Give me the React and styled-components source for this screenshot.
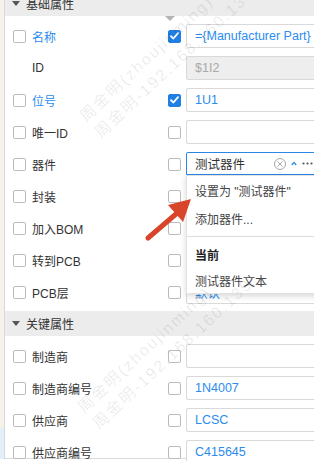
import styled, { createGlobalStyle } from "styled-components";

const GlobalStyle = createGlobalStyle`
  html, body {
    margin: 0;
    padding: 0;
    background: #fff;
  }
  body {
    font-family: "Liberation Sans", "Noto Sans CJK SC", sans-serif;
    font-size: 12px;
    color: #333;
  }
`;

const blue = "#2b8cee";

const Screen = styled.div`
  position: relative;
  width: 314px;
  height: 461px;
  overflow: hidden;
  display: flex;
  align-items: flex-start;
  background: #fff;
`;

const Gutter = styled.div`
  flex: none;
  width: 4px;
  height: 459px;
  background: linear-gradient(to bottom, #f6f2ea 0 428px, #e3effa 428px);
  border-right: 1px solid #d8d8d8;
`;

const Panel = styled.div`
  flex: none;
  width: 313px;
  height: 458px;
  border-bottom: 1px solid #dadada;
`;

const Scroller = styled.div`
  margin-top: -9px;
`;

const SectionHead = styled.div`
  height: 25px;
  display: flex;
  align-items: center;
  gap: 6px;
  padding-left: 7px;
  background: #ececec;
  font-size: 12px;
  color: #333;
  &::before {
    content: "";
    border-left: 4.5px solid transparent;
    border-right: 4.5px solid transparent;
    border-top: 5px solid #555;
  }
`;

const Body = styled.div`
  position: relative;
  padding: 4px 0 3px;
`;

const Splitter = styled.span`
  position: absolute;
  left: 160px;
  top: 0;
  border-left: 5px solid transparent;
  border-right: 5px solid transparent;
  border-top: 5px solid #b4b4b4;
`;

const Row = styled.div`
  height: 32px;
  display: grid;
  grid-template-columns: 155px 18px 1fr;
  align-items: center;
  padding-left: 8px;
`;

const LabelCell = styled.div`
  display: flex;
  align-items: center;
  gap: 6px;
  color: ${(p) => (p.$blue ? blue : "#333")};
  white-space: nowrap;
`;

const Box = styled.span`
  flex: none;
  width: 13px;
  height: 13px;
  box-sizing: border-box;
  border: 1px solid ${(p) => (p.$checked ? "#1f7fe3" : "#bcbcbc")};
  border-radius: 2px;
  background: ${(p) => (p.$checked ? "#1f7fe3" : "#fff")};
  display: flex;
  align-items: center;
  justify-content: center;
  visibility: ${(p) => (p.$hidden ? "hidden" : "visible")};
`;

const Field = styled.div`
  position: relative;
  height: 24px;
  box-sizing: border-box;
  display: flex;
  align-items: center;
  gap: 5px;
  padding: 0 4px 0 8px;
  border: 1px solid ${(p) => (p.$focused ? "#2b87e6" : "#d9d9d9")};
  border-bottom-width: ${(p) => (p.$focused ? "2px" : "1px")};
  border-radius: 2px;
  background: ${(p) => (p.$disabled ? "#eeeeee" : "#fff")};
  color: ${(p) => (p.$disabled ? "#a9a9a9" : p.$plain ? "#333" : blue)};
  font-size: 12.5px;
  white-space: nowrap;
`;

const FieldText = styled.span`
  flex: 1;
  overflow: hidden;
`;

const ClearIcon = styled.span`
  flex: none;
  width: 10px;
  height: 10px;
  border: 1px solid #a8a8a8;
  border-radius: 50%;
  display: flex;
  align-items: center;
  justify-content: center;
`;

const Menu = styled.div`
  position: absolute;
  z-index: 3;
  top: calc(100% + 1px);
  left: -1px;
  width: 150px;
  background: #fff;
  border: 1px solid #e2e2e2;
  box-shadow: 0 2px 6px rgba(0, 0, 0, 0.16);
  color: #444;
  font-size: 12px;
`;

const MenuItem = styled.div`
  height: ${(p) => (p.$tall ? 28 : 26)}px;
  display: flex;
  align-items: center;
  padding-left: 8px;
  font-weight: ${(p) => (p.$bold ? 700 : 400)};
  color: ${(p) => (p.$bold ? "#222" : "#444")};
`;

const MenuSep = styled.div`
  height: 1px;
  margin: 4px 0;
  background: #dcdcdc;
`;

const Watermark = styled.div`
  position: absolute;
  inset: 0;
  z-index: 5;
  pointer-events: none;
  overflow: hidden;
`;

const Mark = styled.div`
  position: absolute;
  left: ${(p) => p.$x}px;
  top: ${(p) => p.$y}px;
  transform: rotate(-43deg);
  transform-origin: 0 0;
  font-size: 16px;
  line-height: 22px;
  letter-spacing: 2px;
  color: rgba(0, 0, 0, 0.09);
  white-space: nowrap;
  font-family: "Liberation Sans", "Noto Sans CJK SC", sans-serif;
`;

const Arrow = styled.svg`
  position: absolute;
  left: 140px;
  top: 192px;
  z-index: 6;
  pointer-events: none;
`;

function Check({ checked, hidden }) {
  return (
    <Box $checked={checked} $hidden={hidden}>
      {checked && (
        <svg width="9" height="8" viewBox="0 0 9 8">
          <path d="M1 4.2 L3.4 6.5 L8 1.2" fill="none" stroke="#fff" strokeWidth="1.8" strokeLinecap="round" strokeLinejoin="round" />
        </svg>
      )}
    </Box>
  );
}

function DeviceMenu() {
  return (
    <Menu>
      <MenuItem $tall>设置为 "测试器件"</MenuItem>
      <MenuItem $tall>添加器件...</MenuItem>
      <MenuSep />
      <MenuItem $bold>当前</MenuItem>
      <MenuItem>测试器件文本</MenuItem>
    </Menu>
  );
}

function PropRow({ row }) {
  return (
    <Row>
      <LabelCell $blue={row.blue}>
        <Check hidden={row.noBox} />
        {row.label}
      </LabelCell>
      <div>{!row.noCheck && <Check checked={row.checked} />}</div>
      <Field $disabled={row.disabled} $focused={row.focused} $plain={row.focused}>
        <FieldText>{row.value}</FieldText>
        {row.focused && (
          <>
            <ClearIcon>
              <svg width="6" height="6" viewBox="0 0 6 6">
                <path d="M0.5 0.5 L5.5 5.5 M5.5 0.5 L0.5 5.5" stroke="#a8a8a8" strokeWidth="1" />
              </svg>
            </ClearIcon>
            <svg width="6" height="5" viewBox="0 0 6 5">
              <path d="M0.8 4 L3 1.4 L5.2 4" fill="none" stroke="#2b87e6" strokeWidth="1.3" />
            </svg>
            <svg width="11" height="3" viewBox="0 0 11 3">
              <circle cx="1.5" cy="1.5" r="1.1" fill="#555" />
              <circle cx="5.5" cy="1.5" r="1.1" fill="#555" />
              <circle cx="9.5" cy="1.5" r="1.1" fill="#555" />
            </svg>
          </>
        )}
        {row.focused && <DeviceMenu />}
      </Field>
    </Row>
  );
}

const basic = [
  { label: "名称", blue: true, checked: true, value: "={Manufacturer Part}" },
  { label: "ID", noBox: true, noCheck: true, value: "$1I2", disabled: true },
  { label: "位号", blue: true, checked: true, value: "1U1" },
  { label: "唯一ID", value: "" },
  { label: "器件", value: "测试器件", focused: true },
  { label: "封装", value: "" },
  { label: "加入BOM", value: "" },
  { label: "转到PCB", value: "" },
  { label: "PCB层", value: "默认" },
];

const key = [
  { label: "制造商", value: "" },
  { label: "制造商编号", value: "1N4007" },
  { label: "供应商", value: "LCSC" },
  { label: "供应商编号", value: "C415645" },
];

const marks = [
  { x: 75, y: 111 },
  { x: 73, y: 402 },
];

export default function App() {
  return (
    <>
      <GlobalStyle />
      <Screen>
        <Gutter />
        <Panel>
          <Scroller>
            <SectionHead>基础属性</SectionHead>
            <Body>
              <Splitter />
              {basic.map((r) => (
                <PropRow key={r.label} row={r} />
              ))}
            </Body>
            <SectionHead>关键属性</SectionHead>
            <Body>
              {key.map((r) => (
                <PropRow key={r.label} row={r} />
              ))}
            </Body>
          </Scroller>
        </Panel>

        <Watermark>
          {marks.map((m, i) => (
            <Mark key={i} $x={m.x} $y={m.y}>
              <div>周金明(zhoujinming)</div>
              <div>周金明-192.168.160.139</div>
            </Mark>
          ))}
        </Watermark>

        <Arrow width="56" height="52" viewBox="0 0 56 52">
          <path d="M8 46 L36 22" stroke="#d8452b" strokeWidth="5" strokeLinecap="round" />
          <polygon points="51,7 28,13 43,30" fill="#d8452b" />
        </Arrow>
      </Screen>
    </>
  );
}
